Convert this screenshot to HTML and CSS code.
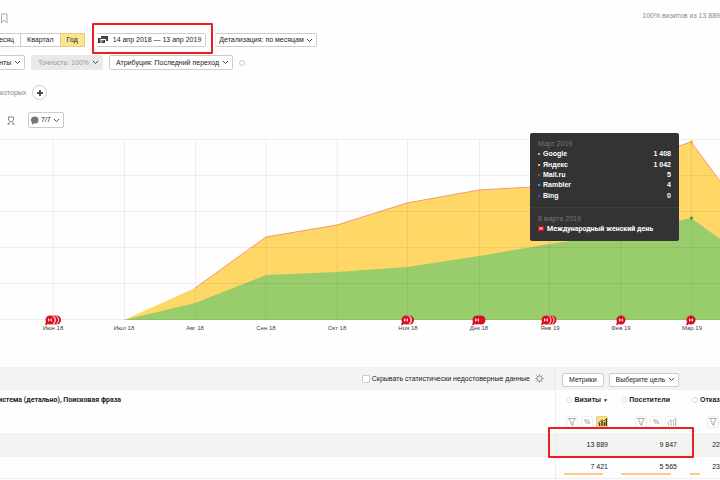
FILE: index.html
```html
<!DOCTYPE html>
<html lang="ru">
<head>
  <meta charset="UTF-8" />
  <meta name="viewport" content="width=device-width, initial-scale=1.0" />
  <title>Поисковые системы</title>
  <link rel="stylesheet" href="styles.css">
</head>
<body>
  <header class="top">
    <button class="icon-btn" aria-label="В закладки">
      <svg width="8" height="11" viewBox="0 0 8 11"><path d="M1.500 1h5.500v9L4.200 7 1.500 10z" fill="none" stroke="#aaa"/></svg>
    </button>
    <span class="sample">100% визитов из 13 889</span>
  </header>

  <div class="toolbar periods">
    <div class="segments">
      <button>Месяц</button>
      <button>Квартал</button>
      <button class="active">Год</button>
    </div>
    <div class="date-range">
      <button class="date-btn">
        <svg width="10" height="8" viewBox="0 0 10 8"><path d="M3 0h7v5H8V3H3z" fill="#444"/><path d="M0 2h2.500v5H0zM3.500 4H7v3H3.500z" fill="#333"/><path d="M1 4h1M4 5h2" stroke="#aaa"/></svg>
        14 апр 2018 — 13 апр 2019
      </button>
      <span class="mark"></span>
    </div>
    <select aria-label="Детализация"><option>Детализация: по месяцам</option></select>
  </div>

  <div class="toolbar settings">
    <select class="segment-select" aria-label="Сегменты"><option>Сегменты</option></select>
    <select disabled aria-label="Точность"><option>Точность: 100%</option></select>
    <select aria-label="Атрибуция"><option>Атрибуция: Последний переход</option></select>
    <span class="help"></span>
  </div>

  <div class="toolbar people">
    <span class="muted">которых</span>
    <button class="add" aria-label="Добавить условие">
      <svg width="8" height="8" viewBox="0 0 8 8"><path d="M4 1v6M1 4h6" stroke="#222" stroke-width="1.500"/></svg>
    </button>
  </div>

  <div class="toolbar notes">
    <button class="icon-btn" aria-label="Пользователи">
      <svg width="8" height="9" viewBox="0 0 8 9"><path d="M1.500 1h5v3L5 5.500H3L1.500 4zM.5 8.500L3 5.500h2l2.500 3M1 8h2M5 8h2" fill="none" stroke="#888"/></svg>
    </button>
    <button class="notes-btn">
      <svg width="8" height="9" viewBox="0 0 8 9"><path d="M4 .5a3.500 3.500 0 0 1 0 7H2.500L1 9V6.500A3.500 3.500 0 0 1 4 .5z" fill="#777"/></svg>
      7/7
      <svg width="7" height="5" viewBox="0 0 7 5"><path d="M1 1l2.500 2.500L6 1" fill="none" stroke="#555"/></svg>
    </button>
  </div>

  <div class="chart">
    <svg class="plot" viewBox="0 0 720 200">
      <defs>
        <g id="pin">
          <path d="M-4 5l1-3" stroke="#d8101f" stroke-width="2"/>
          <circle r="4.500" fill="#d8101f"/>
          <path d="M-1.500 1.500v-3M1.500 1.500v-3M-1.500 0h3" stroke="#fff" stroke-width=".8"/>
        </g>
        <!-- stacked events behind a pin -->
        <g id="more">
          <circle r="4.500" fill="#d8101f"/>
          <circle cx="-2" r="4.500" fill="#ffd9d9"/>
        </g>
      </defs>
      <polygon class="yandex" points="124,185 195,153 266,102 337,90 407,68 479,55 549,51 621,30 691,7 720,46 720,185"/>
      <polyline class="mailru" points="195,153 266,102 337,90 407,68 479,55 549,51 621,30 691,7 720,46"/>
      <polygon class="google" points="124,185 195,168 266,140 337,137 407,132 479,121 549,109 621,99 691,83 720,104 720,185"/>
      <path class="grid" d="M0 4.500h720M0 40.500h720M0 76.500h720M0 112.500h720M0 148.500h720M0 184.500h720"/>
      <path class="grid" d="M53 4v181M124.500 4v181M195.500 4v181M266 4v181M337 4v181M407.500 4v181M479.500 4v181M549.500 4v181M621 4v181M691.500 4v181"/>
      <circle cx="691.500" cy="7" r="1.500" fill="#f0b400"/>
      <circle cx="691.500" cy="83" r="1.500" fill="#3f9a2b"/>
      <g class="labels">
        <text x="53" y="195">Июн 18</text>
        <text x="124" y="195">Июл 18</text>
        <text x="195" y="195">Авг 18</text>
        <text x="266" y="195">Сен 18</text>
        <text x="337" y="195">Окт 18</text>
        <text x="408" y="195">Ноя 18</text>
        <text x="479" y="195">Дек 18</text>
        <text x="550" y="195">Янв 19</text>
        <text x="621" y="195">Фев 19</text>
        <text x="692" y="195">Мар 19</text>
      </g>
      <g>
        <use href="#more" x="56.500" y="185"/><use href="#more" x="53.500" y="185"/><use href="#pin" x="50" y="185"/>
        <use href="#more" x="409.500" y="185"/><use href="#pin" x="406" y="185"/>
        <circle cx="481" cy="185" r="4.500" fill="#d8101f"/><use href="#pin" x="477" y="185"/>
        <use href="#more" x="552" y="185"/><use href="#more" x="549" y="185"/><use href="#pin" x="546" y="185"/>
        <use href="#pin" x="621" y="185"/>
        <use href="#pin" x="691" y="185"/>
      </g>
    </svg>

    <div class="tooltip">
      <div class="tooltip-date">Март 2019</div>
      <ul>
        <li class="c-google"><span>Google</span><b>1 408</b></li>
        <li class="c-yandex"><span>Яндекс</span><b>1 042</b></li>
        <li class="c-mailru"><span>Mail.ru</span><b>5</b></li>
        <li class="c-rambler"><span>Rambler</span><b>4</b></li>
        <li class="c-bing"><span>Bing</span><b>0</b></li>
      </ul>
      <div class="tooltip-event">
        <div class="tooltip-date">8 марта 2019</div>
        <div class="event">
          <svg width="6" height="6" viewBox="0 0 6 6"><path d="M0 0h6v5H2L0 6z" fill="#d8101f"/><path d="M2 1v3M4 1v3M2 2.500h2" stroke="#fff" stroke-width=".7"/></svg>
          Международный женский день
        </div>
      </div>
    </div>
  </div>

  <section class="report">
    <div class="report-bar">
      <div class="hide-box">
        <input type="checkbox" id="hideBad">
        <label for="hideBad">Скрывать статистически недостоверные данные</label>
        <svg width="9" height="9" viewBox="0 0 9 9"><path d="M4.500 0v9M0 4.500h9M1.300 1.300l6.400 6.400M7.700 1.300L1.300 7.700" stroke="#999" stroke-width=".8"/><circle cx="4.500" cy="4.500" r="2.500" fill="#f3f3f2" stroke="#999" stroke-width="1.200"/></svg>
      </div>
      <div class="metrics">
        <button>Метрики</button>
        <select aria-label="Цель"><option>Выберите цель</option></select>
      </div>
    </div>

    <table>
      <colgroup>
        <col>
        <col class="col-visits">
        <col class="col-users">
        <col class="col-bounce">
      </colgroup>
      <thead>
        <tr>
          <th class="name"><span>Поисковая система (детально), Поисковая фраза</span></th>
          <th>
            <div class="metric"><span class="help"></span>Визиты <i>▼</i></div>
            <div class="tools">
              <button aria-label="Фильтр"><svg width="8" height="8" viewBox="0 0 8 8"><path d="M.5.5h7L5 4v3.500L3 6V4z" fill="none" stroke="#aaa"/></svg></button>
              <button aria-label="Проценты">%</button>
              <button class="active" aria-label="График"><svg width="9" height="8" viewBox="0 0 9 8"><path d="M1.500 8V5M4 8V3M6.500 8V4M8.500 8V1" stroke="#443a10" stroke-width="1.500"/><path d="M0 5l4-3 2 1 3-3" fill="none" stroke="#443a10" stroke-width=".7"/></svg></button>
            </div>
          </th>
          <th>
            <div class="metric users"><span class="help"></span>Посетители</div>
            <div class="tools">
              <button aria-label="Фильтр"><svg width="8" height="8" viewBox="0 0 8 8"><path d="M.5.5h7L5 4v3.500L3 6V4z" fill="none" stroke="#aaa"/></svg></button>
              <button aria-label="Проценты">%</button>
              <button aria-label="График"><svg width="9" height="8" viewBox="0 0 9 8"><path d="M1.500 8V5M4 8V3M6.500 8V4M8.500 8V1M0 5l4-3 2 1 3-3" fill="none" stroke="#aaa" stroke-width=".8"/></svg></button>
            </div>
          </th>
          <th>
            <div class="metric bounce"><span class="help"></span>Отказы</div>
            <div class="tools">
              <button aria-label="Фильтр"><svg width="8" height="8" viewBox="0 0 8 8"><path d="M.5.5h7L5 4v3.500L3 6V4z" fill="none" stroke="#aaa"/></svg></button>
              <button aria-label="Проценты">%</button>
              <button aria-label="График"></button>
            </div>
          </th>
        </tr>
      </thead>
      <tbody>
        <tr class="total">
          <td></td>
          <td>13 889</td>
          <td>9 847</td>
          <td>22,1 %</td>
        </tr>
        <tr>
          <td></td>
          <td>7 421<div class="bar" style="width: 88%"></div></td>
          <td>5 565<div class="bar" style="width: 90%"></div></td>
          <td>23,4 %<div class="bar" style="width: 23%"></div></td>
        </tr>
        <tr>
          <td></td>
          <td></td>
          <td></td>
          <td></td>
        </tr>
      </tbody>
    </table>
    <span class="mark"></span>
  </section>
</body>
</html>
```
FILE: styles.css
```css
* { box-sizing: border-box; }
body { margin: 0; font: 7px/10px "Liberation Sans", Arial, sans-serif; color: #222; background: #fefefe; overflow: hidden; }
svg { display: block; flex: none; }
button, select { font: inherit; color: inherit; height: 14px; margin: 0; padding: 0 6px; border: 1px solid #ccc; border-radius: 2px; background: #fff; white-space: nowrap; }
select { appearance: none; padding-right: 12px; background: #fff url("data:image/svg+xml,%3Csvg xmlns='http://www.w3.org/2000/svg' width='7' height='5'%3E%3Cpath d='M1 1l2.500 2.500L6 1' fill='none' stroke='%23444'/%3E%3C/svg%3E") no-repeat right 3px center; }
select:disabled { background-color: #e9e9e9; border-color: #e9e9e9; color: #999; opacity: 1; }

.icon-btn { border: 0; padding: 0; background: none; display: flex; align-items: center; }
.mark { position: absolute; border: 2px solid #ee1c25; border-radius: 1px; pointer-events: none; }
.help { width: 6px; height: 6px; border: 1px solid #ccc; border-radius: 50%; flex: none; }
.muted { color: #888; }

.top { display: flex; justify-content: space-between; height: 33px; padding-top: 11px; }
.sample { color: #888; }
.toolbar { display: flex; align-items: center; white-space: nowrap; }

.segments { display: flex; margin-left: -14px; }
.segments button { border-radius: 0; border-right-width: 0; }
.segments .active { background: #fbe391; border: 1px solid #e3cd80; }
.date-range { position: relative; margin: 0 9px 0 11px; }
.date-btn { display: flex; align-items: center; gap: 5px; padding: 0 4px 0 1px; border-left-color: #fff; }
.date-range .mark { inset: -10px -7px -7px -4px; }
.periods select { border-left-color: #eee; padding-left: 3px; }

.settings { gap: 6px; margin-top: 8px; }
.settings select { height: 15px; }
.segment-select { margin-left: -28px; }

.people { gap: 6px; margin-top: 15px; }
.add { width: 15px; height: 15px; padding: 0; border-radius: 50%; display: flex; align-items: center; justify-content: center; }

.notes { gap: 13px; margin-top: 12px; padding-left: 7px; }
.notes-btn { display: flex; align-items: center; gap: 2px; height: 16px; padding: 0 3px 0 2px; }

.chart { position: relative; margin-top: 7px; }
.plot { width: 100%; height: auto; }
.yandex { fill: #ffd767; }
.google { fill: #99cd6b; }
.mailru { fill: none; stroke: #f39a72; stroke-width: 1; }
.grid { fill: none; stroke: rgba(0, 0, 0, 0.06); }
.labels { font-size: 6px; fill: #444; text-anchor: middle; }

.tooltip { position: absolute; top: -2px; right: 41px; width: 149px; padding: 6px 8px 5px; border-radius: 2px; background: #333; color: #fff; }
.tooltip-date { color: #777; }
.tooltip ul { display: grid; height: 52px; list-style: none; margin: 0 0 6px; padding: 0; }
.tooltip li { display: flex; align-items: center; font-weight: bold; }
.tooltip li::before { content: ""; width: 2px; height: 2px; margin-right: 3px; background: currentColor; }
.tooltip li span { flex: 1; color: #fff; }
.tooltip li b { color: #fff; }
.c-google { color: #97cc64; }
.c-yandex { color: #ffb92e; }
.c-mailru { color: #e0350f; }
.c-rambler { color: #2f9edb; }
.c-bing { color: #7b3f8d; }
.tooltip-event { margin: 0 -8px; padding: 6px 8px 0; border-top: 1px solid #404040; }
.event { display: flex; align-items: center; gap: 3px; padding-bottom: 2px; white-space: nowrap; font-family: Roboto, sans-serif; font-weight: bold; }

.report { position: relative; margin-top: 32px; overflow: hidden; }
.report-bar { display: flex; height: 23px; background: #f3f3f2; }
.hide-box { flex: 1; display: flex; align-items: center; justify-content: flex-end; padding-right: 10px; border-right: 1px solid #e8e8e8; }
.hide-box input { appearance: none; width: 8px; height: 8px; margin: 0 2px 0 0; border: 1px solid #ccc; border-radius: 1px; background: #fff; }
.hide-box svg { margin-left: 5px; }
.metrics { display: flex; align-items: center; gap: 5px; width: 165px; padding: 2px 0 0 7px; }

table { width: calc(100% + 34px); table-layout: fixed; border-collapse: collapse; }
.col-visits { width: 58px; }
.col-users { width: 69px; }
.col-bounce { width: 72px; }
th, td { padding: 0 5px 0 0; text-align: right; white-space: nowrap; }
th { height: 43px; padding-top: 5px; vertical-align: top; font-weight: bold; }
th:first-child, td:first-child { border-right: 1px solid #eee; }
.name { text-align: left; font-family: Roboto, sans-serif; }
.name span { display: block; margin-left: -43px; }
.metric { display: flex; align-items: center; justify-content: flex-end; gap: 2px; }
.metric .help { border-color: #ddd; }
.metric i { font-size: 5px; font-style: normal; }
.users { padding-right: 7px; }
.bounce { justify-content: flex-start; padding-left: 10px; }
.tools { display: flex; justify-content: flex-end; gap: 3px; margin-top: 11px; }
.tools button { display: flex; align-items: center; justify-content: center; width: 12px; height: 12px; padding: 0; border-color: #eee; color: #aaa; }
.tools .active { background: #fbe08a; border-color: #e8cf80; }
td { height: 21px; }
.total td { height: 24px; background: #f3f3f2; }
tbody tr + tr { border-bottom: 1px solid #eee; }
tbody tr + tr td { vertical-align: top; padding-top: 5px; padding-left: 8px; }
.bar { height: 2px; margin-top: 1px; background: #fbcb85; }
td:last-child { padding-right: 20px; }
.report .mark { top: 60px; right: 26px; width: 146px; height: 31px; }
```
